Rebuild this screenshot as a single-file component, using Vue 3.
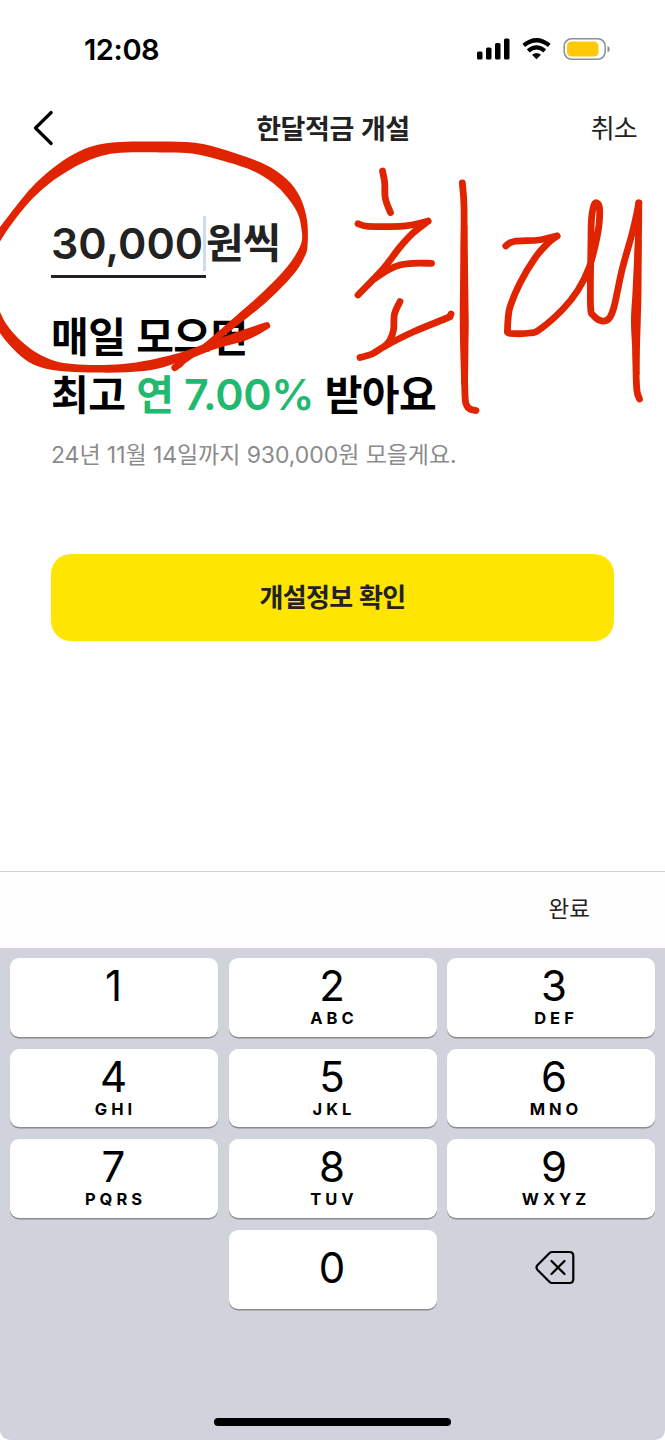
<script setup>
const keys = [
  { digit: '1', letters: '' },
  { digit: '2', letters: 'ABC' },
  { digit: '3', letters: 'DEF' },
  { digit: '4', letters: 'GHI' },
  { digit: '5', letters: 'JKL' },
  { digit: '6', letters: 'MNO' },
  { digit: '7', letters: 'PQRS' },
  { digit: '8', letters: 'TUV' },
  { digit: '9', letters: 'WXYZ' },
]

// Smooth curve through a list of points (Catmull-Rom converted to Béziers).
function curve(points, start = 'M') {
  let d = `${start}${points[0]}`
  for (let i = 0; i < points.length - 1; i++) {
    const a = points[Math.max(i - 1, 0)]
    const b = points[i]
    const c = points[i + 1]
    const e = points[Math.min(i + 2, points.length - 1)]
    d += `C${b[0] + (c[0] - a[0]) / 6} ${b[1] + (c[1] - a[1]) / 6} ${c[0] - (e[0] - b[0]) / 6} ${c[1] - (e[1] - b[1]) / 6} ${c[0]} ${c[1]}`
  }
  return d
}

// A brush mark of changing thickness: its two edges, joined at the tips.
const band = (edge, back) => `${curve(edge)}${curve([...back].reverse(), 'L')}Z`

const brush = [
  band(
    [[-6, 235], [0, 227], [17, 205], [33, 186], [53, 168], [75, 153.500], [95, 145.500], [120, 142], [160, 141.500], [195, 142.800], [227, 150.500], [265, 164.500], [287, 179.500], [300, 197], [307, 220], [307.500, 246], [304, 258], [293, 275], [267, 301.500], [233, 329], [213, 344], [190, 360], [177, 369.500]],
    [[-6, 251], [0, 241.500], [8, 229], [20, 213], [33, 198], [50, 183], [67, 171.500], [87, 161], [115, 153.300], [160, 152.500], [192, 153.500], [220, 160], [251, 170], [273, 183], [287, 197], [297, 212], [301, 226], [301, 244], [287, 267], [263, 292], [233, 318.500], [213, 336], [193, 352], [172, 365.500]],
  ),
  band(
    [[-6, 322], [0, 333], [10, 345.500], [25, 359.500], [43, 368], [67, 371.500], [97, 372.600], [127, 372.200], [155, 369.300], [190, 358.500], [217, 348.500], [247, 340], [268, 329]],
    [[-6, 298], [0, 312], [7, 325], [20, 340], [37, 353], [55, 361], [73, 364], [97, 365], [123, 364], [150, 360], [183, 351.700], [210, 341.700], [233, 333.500], [265, 322.500]],
  ),
  band(
    [[461, 225], [460.300, 270], [459.800, 320], [460.300, 350], [461.300, 385]],
    [[467.400, 225], [468, 270], [468.700, 320], [468.400, 350], [468, 385]],
  ),
  band(
    [[635, 240], [632.600, 290], [631, 320], [632, 345], [633.500, 375]],
    [[641.800, 240], [641.500, 290], [640.800, 320], [640, 345], [639.500, 375]],
  ),
]

const pen = [
  [[174.800, 367.700], [180, 364]],
  [[266.800, 325.500], [260, 328.500]],
  [[382.500, 171], [384.700, 183], [385, 196], [387, 204], [390.500, 212.500]],
  [[358, 223.700], [368, 226.300], [400, 226.300], [414, 224.500], [428, 221.200]],
  [[428, 221.200], [413, 233], [400, 247], [383, 269], [358, 295]],
  [[374, 279], [388, 270], [400, 265], [413, 263.300], [431.500, 263.300]],
  [[400, 301.500], [394.500, 314], [393.500, 330], [390, 340], [385, 346]],
  [[360, 357.500], [372, 354], [386, 345.500], [413, 332], [447, 318], [449.500, 316.500], [451, 314]],
  [[462.300, 183], [464, 206], [464, 260], [464.300, 350], [465, 395], [466.500, 405], [470, 409], [476, 410.500]],
  [[505.700, 246], [514, 241.500], [539, 240], [557, 236]],
  [[557, 236], [548, 243], [535, 258], [520, 283], [510, 307], [508, 320], [507.500, 331]],
  [[507.500, 331], [510, 333.300], [530, 333], [541, 328.500], [563, 309], [578, 290], [589, 268], [596, 242], [599, 225], [599.500, 208], [597, 203], [594, 205], [591.500, 219], [591, 240], [590.500, 305], [594, 316], [602, 321], [609, 318.500], [614, 307], [622, 270], [632, 234], [636.500, 215], [638.800, 203]],
  [[638.800, 203], [638.500, 235], [637, 285], [636, 335], [636, 370], [637, 391], [639.500, 399]],
]
</script>

<template>
  <div class="screen">
    <header class="status">
      <span class="clock">12:08</span>
      <svg class="status-icons" width="136" height="26" viewBox="0 0 136 26">
        <rect x="1" y="14.5" width="5.5" height="8" rx="1.6" />
        <rect x="10" y="10.5" width="5.5" height="12" rx="1.6" />
        <rect x="19" y="6" width="5.5" height="16.5" rx="1.6" />
        <rect x="28" y="1.5" width="5.5" height="21" rx="1.6" />
        <g fill="none" stroke="#000" stroke-width="4.200">
          <path d="M47.700 8.300Q60.500-1.800 73.300 8.300" />
          <path d="M52.200 13.800Q60.500 7 68.800 13.800" />
        </g>
        <path d="M56 17.700Q60.500 14.300 65 17.700L60.500 22.300Z" />
        <rect x="88.200" y="1.700" width="41" height="20.600" rx="7.500" fill="#fff" stroke="#8e8e90" stroke-width="1.500" />
        <rect x="91" y="4.500" width="31.500" height="15" rx="4.500" fill="#ffc90a" />
        <path d="M131.500 9q2.300.8 2.300 3.200t-2.300 3.200z" fill="#8e8e90" />
      </svg>
    </header>

    <nav class="nav">
      <svg class="back" width="22" height="38" viewBox="0 0 22 38">
        <path d="M19.200 3.500L3.500 19L19.200 34.500" fill="none" stroke="#000" stroke-width="3.200" stroke-linecap="round" stroke-linejoin="round" />
      </svg>
      <h1>한달적금 개설</h1>
      <span class="cancel">취소</span>
    </nav>

    <main class="content">
      <div class="amount-row">
        <div class="amount"><span>30,000</span><i class="caret"></i></div>
        <span class="unit">원씩</span>
      </div>
      <p class="line first">매일 모으면</p>
      <p class="line">최고 <em>연 <b>7.00%</b></em> 받아요</p>
      <p class="note">24년 11월 14일까지 930,000원 모을게요.</p>
      <button class="confirm">개설정보 확인</button>
    </main>

    <div class="toolbar"><span>완료</span></div>

    <section class="keyboard">
      <div class="keys">
        <div v-for="key in keys" :key="key.digit" class="key">
          <span class="digit">{{ key.digit }}</span>
          <span class="letters">{{ key.letters }}</span>
        </div>
        <div class="blank"></div>
        <div class="key zero"><span class="digit">0</span></div>
        <div class="delete">
          <svg width="42" height="36" viewBox="0 0 42 36" fill="none" stroke="#000" stroke-width="2.200" stroke-linecap="round" stroke-linejoin="round">
            <path d="M18 2H35.500Q39.300 2 39.300 5.800V29.200Q39.300 33 35.500 33H18Q16.600 33 15.600 32L3.600 20Q1.400 17.500 3.600 15L15.600 3Q16.600 2 18 2Z" />
            <path d="M17.500 11L30.500 24M30.500 11L17.500 24" />
          </svg>
        </div>
      </div>
      <div class="home"></div>
    </section>

    <!-- freehand pen marks over the page -->
    <svg class="ink" width="665" height="1440" viewBox="0 0 665 1440">
      <path v-for="(d, i) in brush" :key="'b' + i" class="brush" :d="d" />
      <path v-for="(points, i) in pen" :key="'p' + i" class="pen" :d="curve(points)" />
    </svg>
  </div>
</template>

<style>
body { margin: 0; background: #fff; }
</style>

<style scoped>
.screen {
  position: relative;
  display: flex;
  flex-direction: column;
  width: 665px;
  height: 1440px;
  overflow: hidden;
  background: #fff;
  color: #222;
  font-family: Inter, "Noto Sans CJK KR", sans-serif;
}
.status {
  display: flex;
  justify-content: space-between;
  align-items: center;
  height: 100px;
  padding: 0 53px 0 84px;
  box-sizing: border-box;
}
.clock { padding-bottom: 2px; font-size: 29px; font-weight: 600; color: #000; letter-spacing: -0.4px; }
.nav {
  display: grid;
  grid-template-columns: 100px 1fr 100px;
  align-items: center;
  height: 56px;
  padding: 0 28px 0 32px;
}
.nav h1 { margin: 3px 3px 0 0; text-align: center; font-size: 27px; line-height: 38px; font-weight: 700; letter-spacing: -0.4px; word-spacing: 1px; white-space: nowrap; }
.cancel { margin-top: 2px; justify-self: end; font-size: 26px; line-height: 38px; letter-spacing: -0.8px; }
.content { height: 715px; padding: 60px 51px 0; box-sizing: border-box; }
.amount-row { display: flex; height: 62px; }
.amount {
  display: flex;
  box-sizing: border-box;
  width: 155px;
  height: 62px;
  border-bottom: 3.500px solid #222;
}
.amount span { width: 152px; font-size: 43px; line-height: 55px; font-weight: 600; white-space: nowrap; }
.caret { flex: none; width: 3px; height: 55px; background: #ced9f4; }
.unit { font-size: 41px; line-height: 55px; font-weight: 700; letter-spacing: -0.6px; white-space: nowrap; }
.line { margin: 0; color: #000; font-size: 41px; line-height: 57px; height: 57px; font-weight: 700; letter-spacing: -0.5px; word-spacing: 1.500px; white-space: nowrap; }
.line.first { margin-top: 31px; }
.line em { font-style: normal; color: #20b96f; }
.line b { font-size: 43px; font-weight: 600; letter-spacing: -0.400px; }
.note { margin: 15px 0 0; height: 34px; font-size: 23px; line-height: 34px; color: #8b8b8b; letter-spacing: -0.070px; white-space: nowrap; }
.confirm {
  display: block;
  width: 563px;
  height: 87px;
  margin-top: 82px;
  padding: 1px 0 0;
  border: 0;
  border-radius: 20px;
  background: #ffe500;
  color: #222;
  font: 700 26px/38px Inter, "Noto Sans CJK KR", sans-serif;
  letter-spacing: -0.7px;
  word-spacing: 1px;
}
.toolbar {
  display: flex;
  justify-content: flex-end;
  align-items: center;
  height: 77px;
  padding: 0 75px 6px 0;
  box-sizing: border-box;
  border-top: 1px solid #d3d3d5;
  background: #fffdfd;
  font-size: 22.500px;
}
.keyboard {
  display: flex;
  flex-direction: column;
  align-items: center;
  justify-content: space-between;
  height: 492px;
  padding: 10px 10px 14px;
  box-sizing: border-box;
  background: #d0d3db;
  border-radius: 0 0 10px 10px;
}
.keys { display: grid; grid-template-columns: repeat(3, 208px); column-gap: 10.500px; grid-auto-rows: 78.500px; row-gap: 12.200px; }
.key {
  display: flex;
  flex-direction: column;
  align-items: center;
  box-sizing: border-box;
  padding-right: 1px;
  background: #fff;
  border-radius: 9px;
  box-shadow: 0 1.500px 0 #8b8c90;
  color: #000;
}
.key:nth-child(3n) { padding: 0 0 0 6px; }
.digit { margin-top: 5px; font-size: 42px; line-height: 46px; font-weight: 400; }
.letters { margin: -1px -4px 0 0; font-size: 16.500px; line-height: 20px; font-weight: 700; letter-spacing: 4px; }
.zero .digit { margin-top: 15px; }
.delete { display: flex; align-items: center; justify-content: center; padding: 0 0 3px 7px; }
.home { width: 237px; height: 8.500px; border-radius: 5px; background: #000; }
.ink { position: absolute; inset: 0; pointer-events: none; }
.brush { fill: #e12400; }
.pen { fill: none; stroke: #e12400; stroke-width: 6.800; stroke-linecap: round; stroke-linejoin: round; }
</style>
